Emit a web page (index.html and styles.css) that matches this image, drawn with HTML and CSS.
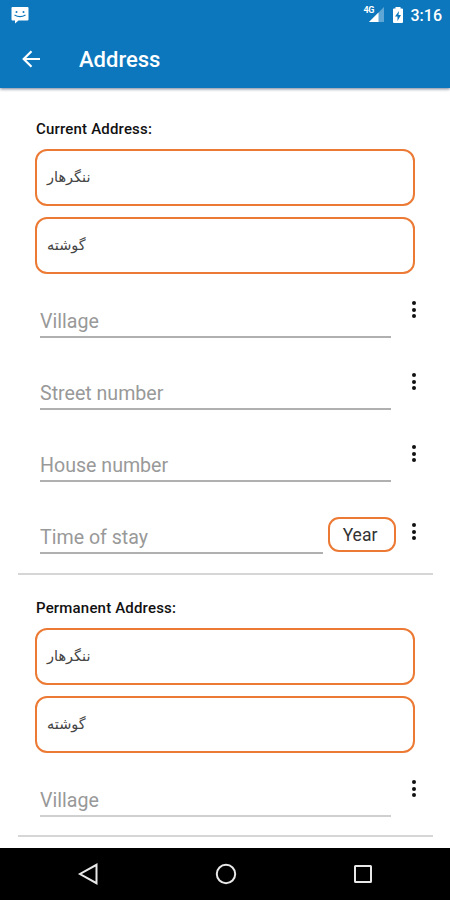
FILE: index.html
```html
<!DOCTYPE html>
<html lang="en">
<head>
<meta charset="utf-8">
<title>Address</title>
<link rel="stylesheet" href="styles.css">
</head>
<body>
<header class="top">
  <div class="status">
    <svg class="message" width="18" height="17" viewBox="0 0 18 17"><path fill="#fff" d="M1.500 0h15a1 1 0 0 1 1 1v11.500a1 1 0 0 1-1 1H7.500L4 16.500v-3H1.500a1 1 0 0 1-1-1V1a1 1 0 0 1 1-1z"/><g fill="#0c77bd"><circle cx="5.500" cy="5" r="1"/><circle cx="12.500" cy="5" r="1"/></g><path d="M3.500 8q5.500 3.200 11 0" fill="none" stroke="#0c77bd" stroke-width="1.200"/></svg>
    <div class="signal">
      <span class="network">4G</span>
      <svg width="16" height="16" viewBox="0 0 16 16"><path fill="#fff" opacity=".35" d="M16 0v15H1z"/><path fill="#fff" d="M10.500 5.500V15H1z"/></svg>
    </div>
    <svg class="battery" width="12" height="16" viewBox="0 0 12 16"><path fill="#fff" d="M3.500 1.500V0h5v1.500H10a1 1 0 0 1 1 1V15a1 1 0 0 1-1 1H2a1 1 0 0 1-1-1V2.500a1 1 0 0 1 1-1z"/><path fill="#0c77bd" d="M7 4L3 9.500h2.500V14L9 8H6.500z"/></svg>
    <span class="clock">3:16</span>
  </div>
  <div class="appbar">
    <svg width="20" height="20" viewBox="0 0 20 20"><path d="M19 10H3M10.500 2.200L2.700 10l7.800 7.800" fill="none" stroke="#fff" stroke-width="2.200"/></svg>
    <h1>Address</h1>
  </div>
</header>
<main>
  <section class="current">
    <h2>Current Address:</h2>
    <div class="select" lang="ps"><span dir="rtl">ننگرهار</span></div>
    <div class="select" lang="ps"><span dir="rtl">گوشته</span></div>
    <div class="row"><div class="field">Village</div><div class="more"><i></i><i></i><i></i></div></div>
    <div class="row"><div class="field">Street number</div><div class="more"><i></i><i></i><i></i></div></div>
    <div class="row"><div class="field">House number</div><div class="more"><i></i><i></i><i></i></div></div>
    <div class="row stay"><div class="field">Time of stay</div><div class="unit">Year</div><div class="more"><i></i><i></i><i></i></div></div>
  </section>
  <section class="permanent">
    <h2>Permanent Address:</h2>
    <div class="select" lang="ps"><span dir="rtl">ننگرهار</span></div>
    <div class="select" lang="ps"><span dir="rtl">گوشته</span></div>
    <div class="row last"><div class="field">Village</div><div class="more"><i></i><i></i><i></i></div></div>
  </section>
</main>
<nav>
  <svg width="22" height="22" viewBox="0 0 22 22"><path d="M19.500 1.800v18.400L3 11z"/></svg>
  <svg width="22" height="22" viewBox="0 0 22 22"><circle cx="11" cy="11" r="9.200"/></svg>
  <svg width="22" height="22" viewBox="0 0 22 22"><rect x="3" y="3" width="16" height="16" rx=".5"/></svg>
</nav>
</body>
</html>
```
FILE: styles.css
```css
* { box-sizing: border-box; }
body {
  margin: 0;
  height: 900px;
  display: flex;
  flex-direction: column;
  overflow: hidden;
  background: #fff;
  font-family: Roboto, "Liberation Sans", sans-serif;
}
svg { display: block; }
.top {
  flex: none;
  height: 88px;
  background: #0c77bd;
  color: #fff;
  box-shadow: 0 1px 3px rgba(0, 20, 60, .55);
}
.status {
  height: 30px;
  display: flex;
  align-items: center;
  padding: 0 8px 0 11px;
}
.message { margin-right: auto; }
.signal { position: relative; margin-right: 8px; }
.network {
  position: absolute;
  left: -4px;
  top: -1px;
  font-size: 9px;
  line-height: 9px;
  letter-spacing: -.5px;
  font-weight: 700;
}
.battery { margin-right: 7px; }
.clock { font-size: 16px; font-weight: 500; }
.appbar {
  height: 58px;
  display: flex;
  align-items: center;
  gap: 38px;
  padding-left: 21px;
}
h1 { margin: 0; font-size: 22px; font-weight: 500; }
main { flex: 1; padding: 0 17px 0 18px; }
section {
  padding: 0 18px 0 17px;
  border-bottom: 2px solid #d6d6d6;
}
.current { padding-top: 32px; height: 487px; }
.permanent { padding-top: 24px; height: 262px; }
h2 {
  margin: 0 0 11px;
  padding-left: 1px;
  font-size: 15px;
  line-height: 18px;
  letter-spacing: .18px;
  font-weight: 500;
  color: #111;
}
.select {
  height: 57px;
  margin-bottom: 11px;
  padding: 0 10px 1px;
  display: flex;
  align-items: center;
  border: 2px solid #ec7a34;
  border-radius: 12px;
  color: #444;
  font: 14.5px "DejaVu Sans", sans-serif;
}
.row {
  height: 72px;
  padding-left: 5px;
  display: flex;
  align-items: flex-end;
}
.select + .row { height: 53px; }
.field {
  flex: 1;
  height: 34px;
  border-bottom: 2px solid #b0b0b0;
  color: #999;
  font-size: 19.6px;
  line-height: 36px;
}
.more {
  width: 4px;
  margin: 0 -1px 20px 21px;
  display: flex;
  flex-direction: column;
  gap: 2.5px;
}
.more i { height: 4px; border-radius: 50%; background: #111; }
.unit {
  width: 68px;
  height: 35px;
  margin: 0 0 2px 5px;
  padding-right: 4px;
  border: 2px solid #ec7a34;
  border-radius: 11px;
  text-align: center;
  font-size: 17.5px;
  line-height: 32px;
  color: #333;
}
.stay .more { margin-left: 16px; margin-bottom: 14px; }
.last .field { border-color: #d0d0d0; }
nav {
  flex: none;
  height: 52px;
  padding: 0 76px 0 77px;
  display: flex;
  align-items: center;
  justify-content: space-between;
  background: #000;
}
nav svg { fill: none; stroke: #e8e8e8; stroke-width: 2; }
```
